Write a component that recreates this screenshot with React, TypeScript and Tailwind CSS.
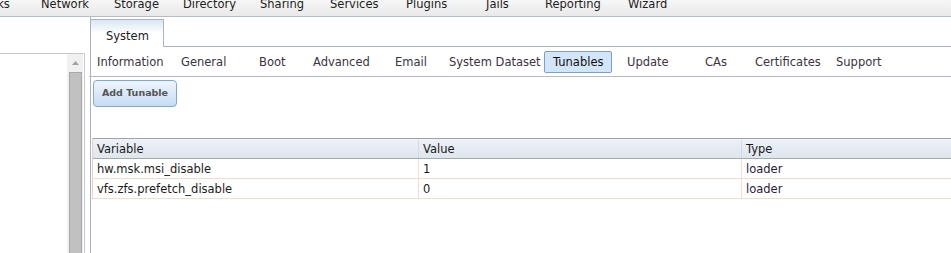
import React from "react";

const topNav = [
  { label: "Tasks", w: 62 },
  { label: "Network", w: 73 },
  { label: "Storage", w: 69 },
  { label: "Directory", w: 77 },
  { label: "Sharing", w: 70 },
  { label: "Services", w: 76 },
  { label: "Plugins", w: 80 },
  { label: "Jails", w: 59 },
  { label: "Reporting", w: 83 },
  { label: "Wizard", w: 80 },
];

const subNav = [
  { label: "Information", w: 84 },
  { label: "General", w: 78 },
  { label: "Boot", w: 54 },
  { label: "Advanced", w: 82 },
  { label: "Email", w: 54 },
  { label: "System Dataset", w: 103 },
  { label: "Tunables", w: 75, active: true },
  { label: "Update", w: 78 },
  { label: "CAs", w: 50 },
  { label: "Certificates", w: 81 },
  { label: "Support", w: 80 },
];

const rows = [
  { v: "hw.msk.msi_disable", val: "1", t: "loader" },
  { v: "vfs.zfs.prefetch_disable", val: "0", t: "loader" },
];

export default function App() {
  return (
    <div
      className="w-[951px] h-[253px] overflow-hidden bg-white flex flex-col text-[#222]"
      style={{ fontFamily: '"DejaVu Sans", Verdana, sans-serif' }}
    >
      {/* top nav */}
      <div className="h-[17px] shrink-0 overflow-hidden border-b border-[#b4bcc8] bg-gradient-to-b from-[#f6f6f6] to-[#e9e9e9]">
        <div className="flex -mt-[4px] -ml-[21px] text-[11.5px] leading-[16px] text-[#1d1d1d]">
          {topNav.map((n) => (
            <div key={n.label} className="shrink-0" style={{ width: n.w }}>
              {n.label}
            </div>
          ))}
        </div>
      </div>

      <div className="flex flex-1 min-h-0">
        {/* left panel */}
        <div className="w-[90px] shrink-0 pt-[36px] flex flex-col">
          <div className="w-[85px] flex-1 border-t border-r border-[#c9c9c9] flex justify-end">
            <div className="w-[16px] mr-[1px] bg-[#f0f0f0] flex flex-col items-center">
              <div className="h-[18px] w-full flex items-center justify-center">
                <svg width="7" height="4" viewBox="0 0 7 4">
                  <path d="M3.5 0 L7 4 L0 4 Z" fill="#a3a3a3" />
                </svg>
              </div>
              <div className="w-[13px] flex-1 bg-[#c1c1c1] border border-[#a9a9a9] border-b-0" />
            </div>
          </div>
        </div>

        {/* main */}
        <div className="flex-1 min-w-0 flex flex-col border-l border-[#a9b2c0]">
          {/* tab row */}
          <div className="flex h-[30px] pt-[2px] shrink-0">
            <div className="w-[73px] h-[28px] border-t border-r border-[#a9b2c0] bg-gradient-to-b from-[#d9e6f3] via-white to-white text-[11.5px] text-[#1d1d1d] pl-[15px] pt-[9px] leading-[14px]">
              System
            </div>
            <div className="flex-1 border-b border-[#a9b2c0]" />
          </div>

          {/* sub nav */}
          <div className="h-[30px] shrink-0 border-b border-[#b6bcc6] flex items-center -ml-[2px] text-[11.5px] text-[#3a3340]">
            {subNav.map((s) =>
              s.active ? (
                <div key={s.label} className="shrink-0" style={{ width: s.w }}>
                  <div className="w-[68px] h-[22px] border border-[#7e9fc6] rounded-[2px] bg-[#d3e5f8] text-[#111] pl-[8px] leading-[20px]">
                    {s.label}
                  </div>
                </div>
              ) : (
                <div key={s.label} className="shrink-0 pl-[8px] leading-[20px]" style={{ width: s.w }}>
                  {s.label}
                </div>
              )
            )}
          </div>

          {/* button */}
          <div className="h-[61px] shrink-0 pt-[3px] pl-[2px]">
            <div className="w-[84px] h-[27px] rounded-[4px] border border-[#86a6cd] bg-gradient-to-b from-[#eef5fd] to-[#c6dcf4] flex items-center justify-center text-[9.5px] font-bold text-[#555]">
              Add Tunable
            </div>
          </div>

          {/* table */}
          <div className="ml-[1px] text-[11.5px] text-[#1a1a1a] border-l border-[#e6d2bf]">
            <div className="flex h-[21px] border-t border-[#a3a3a3] border-b border-b-[#a8a8a8] bg-gradient-to-b from-[#eef2f7] to-[#dde5ee] leading-[19px] pt-[1px]">
              <div className="w-[326px] shrink-0 pl-[4px] border-r border-[#d3d9e1]">Variable</div>
              <div className="w-[323px] shrink-0 pl-[4px] border-r border-[#d3d9e1]">Value</div>
              <div className="flex-1 pl-[4px]">Type</div>
            </div>
            {rows.map((r) => (
              <div key={r.v} className="flex h-[20px] border-b border-[#f1dfcb] leading-[19px]">
                <div className="w-[326px] shrink-0 pl-[4px] pt-[1px] border-r border-[#f1dfcb]">{r.v}</div>
                <div className="w-[323px] shrink-0 pl-[4px] pt-[1px] border-r border-[#f1dfcb]">{r.val}</div>
                <div className="flex-1 pl-[4px] pt-[1px] text-[#2a1a35]">{r.t}</div>
              </div>
            ))}
          </div>
        </div>
      </div>
    </div>
  );
}
